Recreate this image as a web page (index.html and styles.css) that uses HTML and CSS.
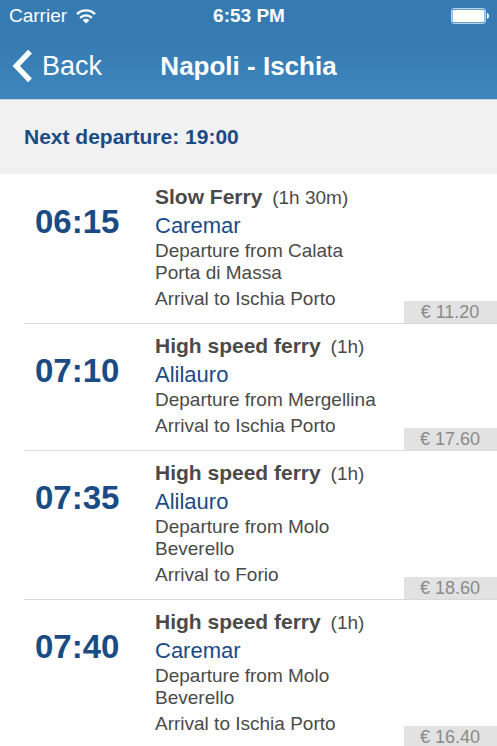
FILE: index.html
```
<!DOCTYPE html>
<html lang="en">
    <head>
        <meta charset="utf-8">
        <meta name="viewport" content="width=device-width, initial-scale=1">
        <title>Napoli - Ischia</title>
        <link rel="stylesheet" href="styles.css">
    </head>
    <body>
        <header class="top">
            <div class="status">
                <div class="carrier">
                    <span>Carrier</span>
                    <svg class="wifi" width="20" height="15" viewBox="0 0 20 15" fill="none" stroke="#fff" stroke-width="2.4">
                        <path d="M1 5.2a12.6 12.6 0 0 1 18 0"/>
                        <path d="M4.2 8.8a8.2 8.2 0 0 1 11.6 0"/>
                        <path d="M10 14.5l-3.3-3.3a4.7 4.7 0 0 1 6.6 0z" fill="#fff" stroke="none"/>
                    </svg>
                </div>
                <strong>6:53 PM</strong>
                <svg class="battery" width="38" height="16" viewBox="0 0 38 16">
                    <rect x="0.5" y="0.5" width="34" height="15" rx="2.5" fill="none" stroke="#b3d2e8"/>
                    <rect x="1.5" y="1.7" width="32" height="12.6" rx="1.5" fill="#fff"/>
                    <path d="M36 5c2.8 1 2.8 5 0 6z" fill="#fff"/>
                </svg>
            </div>
            <nav class="bar">
                <button class="back" type="button">
                    <svg width="20" height="34" viewBox="0 0 20 34" fill="none" stroke="#fff" stroke-width="5.4">
                        <path d="M18 2.6L4.3 17L18 31.4"/>
                    </svg>
                    Back
                </button>
                <h1>Napoli - Ischia</h1>
            </nav>
        </header>

        <main>
            <h2 class="next">Next departure: 19:00</h2>
            <ul class="ferries">
                <li class="ferry">
                    <time class="time">06:15</time>
                    <div class="info">
                        <h3>Slow Ferry <small>(1h 30m)</small></h3>
                        <p class="company">Caremar</p>
                        <p>Departure from Calata Porta di Massa</p>
                        <p>Arrival to Ischia Porto</p>
                    </div>
                    <span class="price">€ 11.20</span>
                </li>
                <li class="ferry">
                    <time class="time">07:10</time>
                    <div class="info">
                        <h3>High speed ferry <small>(1h)</small></h3>
                        <p class="company">Alilauro</p>
                        <p>Departure from Mergellina</p>
                        <p>Arrival to Ischia Porto</p>
                    </div>
                    <span class="price">€ 17.60</span>
                </li>
                <li class="ferry">
                    <time class="time">07:35</time>
                    <div class="info">
                        <h3>High speed ferry <small>(1h)</small></h3>
                        <p class="company">Alilauro</p>
                        <p>Departure from Molo Beverello</p>
                        <p>Arrival to Forio</p>
                    </div>
                    <span class="price">€ 18.60</span>
                </li>
                <li class="ferry">
                    <time class="time">07:40</time>
                    <div class="info">
                        <h3>High speed ferry <small>(1h)</small></h3>
                        <p class="company">Caremar</p>
                        <p>Departure from Molo Beverello</p>
                        <p>Arrival to Ischia Porto</p>
                    </div>
                    <span class="price">€ 16.40</span>
                </li>
            </ul>
        </main>
    </body>
</html>
```
FILE: styles.css
```
* {
    box-sizing: border-box;
}
body {
    margin: 0;
    background: #fff;
    color: #4a4a4a;
    font-family: "Liberation Sans", Arial, sans-serif;
    font-size: 19px;
    line-height: 22px;
}
h1, h2, h3, p, ul {
    margin: 0;
    padding: 0;
}
.top {
    background: linear-gradient(#357bb2 40%, #3e86bd);
    border-bottom: 1px solid #c3d9ec;
    color: #fff;
}
.status, .bar {
    display: grid;
    grid-template-columns: 1fr auto 1fr;
    align-items: center;
}
.status {
    height: 32px;
    padding: 0 8px 0 9px;
}
.carrier {
    display: flex;
    align-items: center;
    gap: 9px;
}
.battery {
    justify-self: end;
}
.bar {
    height: 67px;
    padding: 0 12px;
}
.bar h1 {
    font-size: 26px;
    line-height: 32px;
}
.back {
    display: flex;
    align-items: center;
    justify-self: start;
    gap: 10px;
    padding: 0;
    border: 0;
    background: none;
    color: #fff;
    font-family: inherit;
    font-size: 27px;
    line-height: 32px;
    cursor: pointer;
}
.next {
    padding: 26px 24px;
    background: #f1f1f1;
    color: #1a4b84;
    font-size: 21px;
    line-height: 22px;
}
.ferries {
    padding-top: 1px;
    list-style: none;
}
.ferry {
    display: grid;
    grid-template-columns: 131px 1fr 93px;
    margin-left: 24px;
    border-bottom: 1px solid #d9d9d9;
}
.time {
    padding: 29px 0 0 11px;
    color: #1a4b84;
    font-size: 33px;
    font-weight: bold;
    line-height: 36px;
}
.info {
    padding: 8px 16px 9px 0;
}
.info p {
    margin-bottom: 4px;
}
.info h3, .info .company {
    margin: 0;
    line-height: 28px;
}
.info h3 {
    font-size: 21px;
}
.info h3 small {
    margin-left: 4px;
    font-size: 19px;
    font-weight: normal;
}
.info .company {
    color: #1a4b84;
    font-size: 22px;
}
.price {
    align-self: end;
    padding-right: 1px;
    background: #e2e2e2;
    color: #8a8a8a;
    font-size: 18px;
    text-align: center;
}
```
